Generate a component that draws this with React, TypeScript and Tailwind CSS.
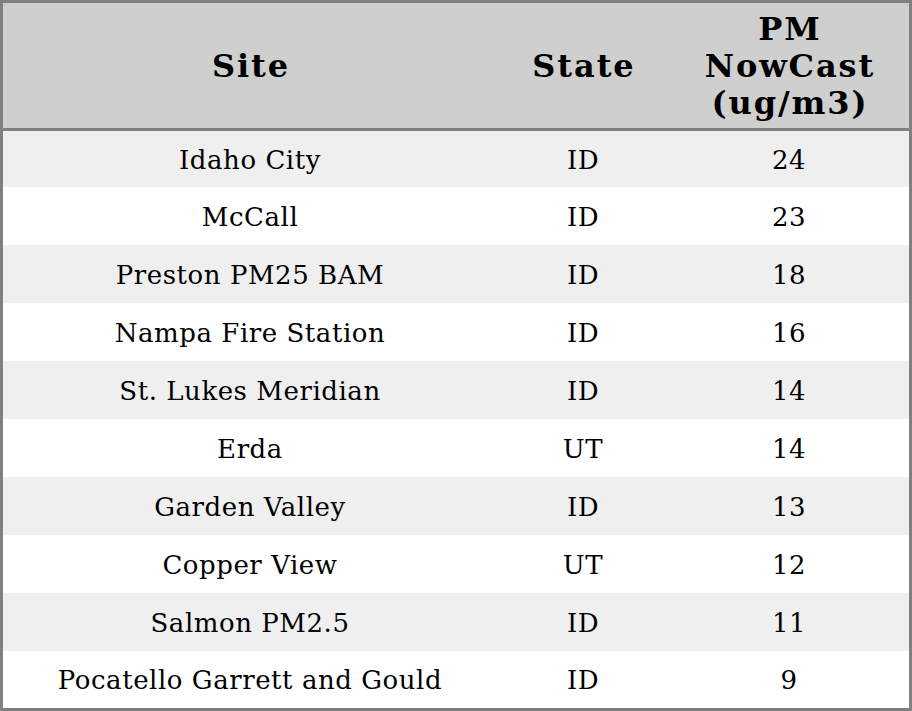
import React from "react";

const rows: [string, string, string][] = [
  ["Idaho City", "ID", "24"],
  ["McCall", "ID", "23"],
  ["Preston PM25 BAM", "ID", "18"],
  ["Nampa Fire Station", "ID", "16"],
  ["St. Lukes Meridian", "ID", "14"],
  ["Erda", "UT", "14"],
  ["Garden Valley", "ID", "13"],
  ["Copper View", "UT", "12"],
  ["Salmon PM2.5", "ID", "11"],
  ["Pocatello Garrett and Gould", "ID", "9"],
];

export default function App() {
  return (
    <div
      className="w-[912px] h-[711px] border-[3px] border-[#808080] bg-white text-black flex flex-col"
      style={{ fontFamily: '"DejaVu Serif", serif' }}
    >
      <div className="h-[128px] shrink-0 border-b-[3px] border-[#808080] bg-[#cfcfcf] grid grid-cols-[494px_172px_240px] items-center text-center font-bold text-[32px] leading-[37px] tracking-[1.9px] pt-[2px]">
        <div className="pl-[2px]">Site</div>
        <div className="pl-[2px]">State</div>
        <div className="pl-[2px]">
          PM
          <br />
          NowCast
          <br />
          (ug/m3)
        </div>
      </div>
      <div className="grid grid-rows-[56px_repeat(8,58px)_56px] flex-1">
        {rows.map((r, i) => (
          <div
            key={i}
            className={`grid grid-cols-[494px_172px_240px] items-center text-center text-[26px] tracking-[0.55px] pt-[2px] ${
              i % 2 === 0 ? "bg-[#efefef]" : "bg-white"
            }`}
          >
            <div>{r[0]}</div>
            <div>{r[1]}</div>
            <div>{r[2]}</div>
          </div>
        ))}
      </div>
    </div>
  );
}
